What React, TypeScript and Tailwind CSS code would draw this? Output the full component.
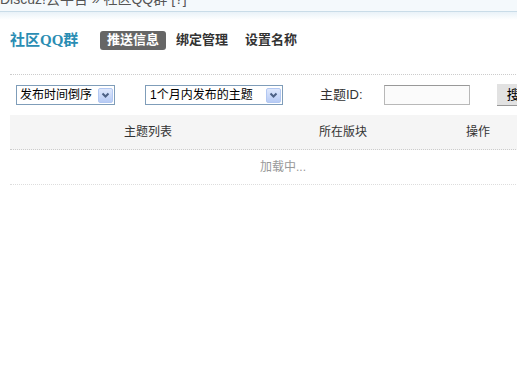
import React from "react";

const font = { fontFamily: '"Liberation Sans", "Noto Sans CJK SC", sans-serif' };

function Arrow() {
  return (
    <div className="w-[15px] h-[15px] border border-[#b3c8f2] bg-gradient-to-b from-[#dfe8fc] to-[#b7cbf5] rounded-[2px] flex items-center justify-center">
      <svg width="9" height="7" viewBox="0 0 9 7">
        <path d="M1.5 1.5 L4.5 4.5 L7.5 1.5" stroke="#4d6185" strokeWidth="2" fill="none" />
      </svg>
    </div>
  );
}

export default function App() {
  return (
    <div className="w-[517px] h-[372px] overflow-hidden bg-white text-[12px] text-[#333]" style={font}>
      <div className="w-[560px]">
        {/* top bar */}
        <div className="h-[12px] overflow-hidden bg-[#f4f9fc] border-b border-[#c9dce8] relative">
          <div className="absolute left-0 top-[-9px] text-[14px] text-[#555] whitespace-nowrap leading-[16px]">
            Discuz!云平台 » 社区QQ群 [?]
          </div>
        </div>
        <div className="h-[8px] bg-gradient-to-b from-[#e9f2f8] to-white" />

        {/* title + tabs */}
        <div className="flex items-center h-[20px] mt-[10px] pl-[10px]">
          <div className="text-[15px] font-bold text-[#2a8db3] w-[90px]" style={{ fontFamily: '"Liberation Serif", "Noto Sans CJK SC", serif' }}>
            社区QQ群
          </div>
          <div className="bg-[#666] text-white font-bold text-[13px] rounded-[3px] h-[19px] px-[7px] flex items-center">推送信息</div>
          <div className="font-bold text-[13px] text-[#333] ml-[10px]">绑定管理</div>
          <div className="font-bold text-[13px] text-[#333] ml-[17px]">设置名称</div>
        </div>

        <div className="mt-[24px] ml-[10px] border-t border-dotted border-[#ccc]" />

        {/* filters */}
        <div className="flex items-center h-[20px] mt-[10px]">
          <div className="ml-[16px] w-[99px] h-[20px] border border-[#7f9db9] flex items-center justify-between pl-[3px] pr-[1px] text-[12px] text-[#000]">
            <span>发布时间倒序</span>
            <Arrow />
          </div>
          <div className="ml-[30px] w-[138px] h-[20px] border border-[#7f9db9] flex items-center justify-between pl-[4px] pr-[1px] text-[12px] text-[#000]">
            <span>1个月内发布的主题</span>
            <Arrow />
          </div>
          <div className="ml-[37px] text-[13px] text-[#333]">主题ID:</div>
          <div className="ml-[21px] w-[86px] h-[20px] border border-[#b8b8b8] border-t-[#999] bg-[#fbfbfb]" />
          <div className="ml-[27px] w-[50px] h-[22px] bg-[#e2e2e2] border-b border-[#999] border-r flex items-center pl-[10px] text-[13px] text-[#000]">
            搜索
          </div>
        </div>

        {/* table */}
        <div className="ml-[10px] mt-[10px] w-[546px]">
          <div className="grid grid-cols-[276px_114px_156px] h-[35px] items-center bg-[#f5f5f5] border-b border-dotted border-[#ccc] text-[#333]">
            <div className="text-center">主题列表</div>
            <div className="text-center">所在版块</div>
            <div className="text-center">操作</div>
          </div>
          <div className="h-[35px] flex items-center justify-center border-b border-dotted border-[#ddd] text-[#999]">
            加载中...
          </div>
        </div>
      </div>
    </div>
  );
}
